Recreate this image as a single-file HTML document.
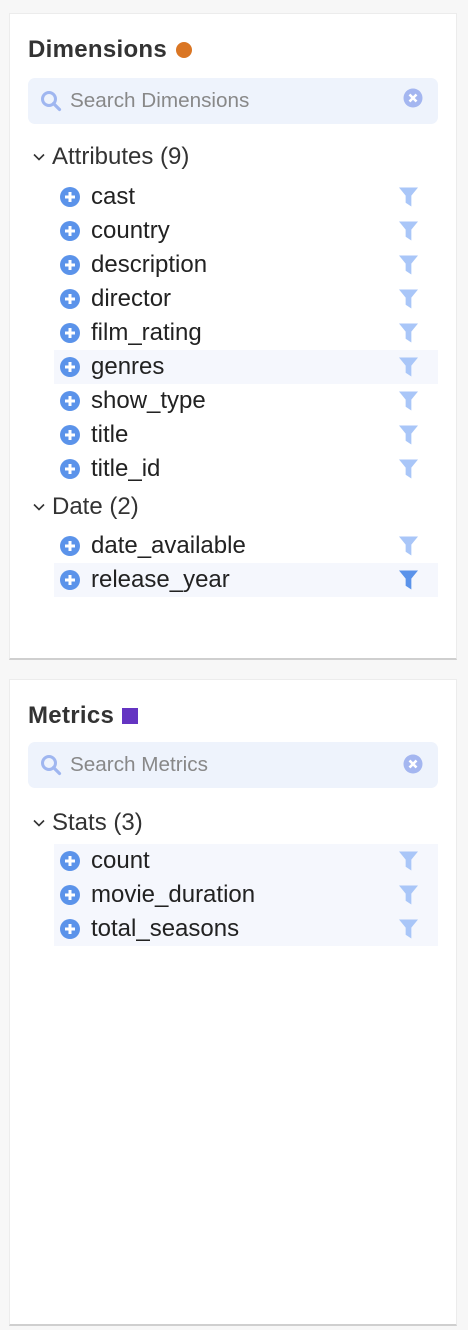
<!DOCTYPE html>
<html><head><style>
body{margin:0;width:468px;height:1330px;background:#f7f7f7;font-family:"Liberation Sans",Helvetica,Arial,sans-serif;position:relative;overflow:hidden}
.panel{position:absolute;left:9px;width:446px;background:#fff;border:1px solid #ececec;border-bottom:2px solid #cfcfcf}
.abs{position:absolute}
.title{position:absolute;left:18px;font-weight:bold;font-size:24px;letter-spacing:0.3px;color:#333;line-height:26px}
.search{position:absolute;left:18px;width:410px;height:46px;background:#eef3fc;border-radius:7px}
.search span{position:absolute;left:42px;top:0;line-height:46px;font-size:20.7px;color:#888}
.grp{position:absolute;left:22px;font-size:24px;color:#333;line-height:30px}
.grp svg{position:absolute;left:0;top:10px}
.grp span{position:absolute;left:20px;white-space:nowrap}
.row{position:absolute;left:44px;width:384px;height:34px}
.row.hl{background:#f5f7fd}
.row .p{position:absolute;left:6px;top:7px}
.row .t{position:absolute;left:37px;top:0;line-height:34px;font-size:24px;color:#222}
.row .f{position:absolute;left:345px;top:7px}
</style></head><body>
<svg width="0" height="0" style="position:absolute">
<defs>
<symbol id="plus" viewBox="0 0 20 20"><circle cx="10" cy="10" r="10" fill="#5b93ea"/><path d="M10 5v10M5 10h10" stroke="#fff" stroke-width="3"/></symbol>
<symbol id="filt" viewBox="0 0 20 20"><path d="M0 0h20l-7 8.5V20l-6-4V8.5z"/></symbol>
<symbol id="srch" viewBox="0 0 22 22"><circle cx="9" cy="9" r="6.5" fill="none" stroke="#9fb6f0" stroke-width="3"/><path d="M13.5 13.5l6 6" stroke="#9fb6f0" stroke-width="3.2" stroke-linecap="round"/></symbol>
<symbol id="clr" viewBox="0 0 20 20"><circle cx="10" cy="10" r="9.5" fill="#a4b6f0"/><path d="M6.5 6.5l7 7M13.5 6.5l-7 7" stroke="#fff" stroke-width="2.6"/></symbol>
<symbol id="chev" viewBox="0 0 14 10"><path d="M2 2.5l5 5 5-5" fill="none" stroke="#333" stroke-width="1.6"/></symbol>
</defs></svg>

<div class="panel" style="top:13px;height:644px">
  <div class="title" style="top:23px">Dimensions</div>
  <div class="abs" style="left:166px;top:28px;width:16px;height:16px;border-radius:50%;background:#da7624"></div>
  <div class="search" style="top:64px"><svg class="abs" style="left:12px;top:12px" width="22" height="22"><use href="#srch"/></svg><span>Search Dimensions</span><svg class="abs" style="left:375px;top:10px" width="20" height="20"><use href="#clr"/></svg></div>
  <div class="grp" style="top:128px"><svg width="14" height="10"><use href="#chev"/></svg><span>Attributes (9)</span></div>
  <div class="row" style="top:166px"><svg class="p" width="20" height="20"><use href="#plus"/></svg><div class="t">cast</div><svg class="f" width="19" height="20" fill="#a9c6f8"><use href="#filt"/></svg></div>
  <div class="row" style="top:200px"><svg class="p" width="20" height="20"><use href="#plus"/></svg><div class="t">country</div><svg class="f" width="19" height="20" fill="#a9c6f8"><use href="#filt"/></svg></div>
  <div class="row" style="top:234px"><svg class="p" width="20" height="20"><use href="#plus"/></svg><div class="t">description</div><svg class="f" width="19" height="20" fill="#a9c6f8"><use href="#filt"/></svg></div>
  <div class="row" style="top:268px"><svg class="p" width="20" height="20"><use href="#plus"/></svg><div class="t">director</div><svg class="f" width="19" height="20" fill="#a9c6f8"><use href="#filt"/></svg></div>
  <div class="row" style="top:302px"><svg class="p" width="20" height="20"><use href="#plus"/></svg><div class="t">film_rating</div><svg class="f" width="19" height="20" fill="#a9c6f8"><use href="#filt"/></svg></div>
  <div class="row hl" style="top:336px"><svg class="p" width="20" height="20"><use href="#plus"/></svg><div class="t">genres</div><svg class="f" width="19" height="20" fill="#a9c6f8"><use href="#filt"/></svg></div>
  <div class="row" style="top:370px"><svg class="p" width="20" height="20"><use href="#plus"/></svg><div class="t">show_type</div><svg class="f" width="19" height="20" fill="#a9c6f8"><use href="#filt"/></svg></div>
  <div class="row" style="top:404px"><svg class="p" width="20" height="20"><use href="#plus"/></svg><div class="t">title</div><svg class="f" width="19" height="20" fill="#a9c6f8"><use href="#filt"/></svg></div>
  <div class="row" style="top:438px"><svg class="p" width="20" height="20"><use href="#plus"/></svg><div class="t">title_id</div><svg class="f" width="19" height="20" fill="#a9c6f8"><use href="#filt"/></svg></div>
  <div class="grp" style="top:478px"><svg width="14" height="10"><use href="#chev"/></svg><span>Date (2)</span></div>
  <div class="row" style="top:515px"><svg class="p" width="20" height="20"><use href="#plus"/></svg><div class="t">date_available</div><svg class="f" width="19" height="20" fill="#a9c6f8"><use href="#filt"/></svg></div>
  <div class="row hl" style="top:549px"><svg class="p" width="20" height="20"><use href="#plus"/></svg><div class="t">release_year</div><svg class="f" width="19" height="20" fill="#5b93ea"><use href="#filt"/></svg></div>
</div>

<div class="panel" style="top:679px;height:644px">
  <div class="title" style="top:23px">Metrics</div>
  <div class="abs" style="left:112px;top:28px;width:16px;height:16px;background:#6434c2"></div>
  <div class="search" style="top:62px"><svg class="abs" style="left:12px;top:12px" width="22" height="22"><use href="#srch"/></svg><span>Search Metrics</span><svg class="abs" style="left:375px;top:12px" width="20" height="20"><use href="#clr"/></svg></div>
  <div class="grp" style="top:128px"><svg width="14" height="10"><use href="#chev"/></svg><span>Stats (3)</span></div>
  <div class="row hl" style="top:164px"><svg class="p" width="20" height="20"><use href="#plus"/></svg><div class="t">count</div><svg class="f" width="19" height="20" fill="#a9c6f8"><use href="#filt"/></svg></div>
  <div class="row hl" style="top:198px"><svg class="p" width="20" height="20"><use href="#plus"/></svg><div class="t">movie_duration</div><svg class="f" width="19" height="20" fill="#a9c6f8"><use href="#filt"/></svg></div>
  <div class="row hl" style="top:232px"><svg class="p" width="20" height="20"><use href="#plus"/></svg><div class="t">total_seasons</div><svg class="f" width="19" height="20" fill="#a9c6f8"><use href="#filt"/></svg></div>
</div>
</body></html>
